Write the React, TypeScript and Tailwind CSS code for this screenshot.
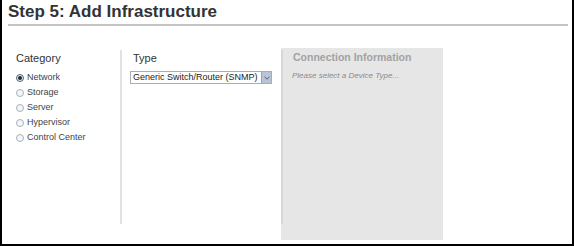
import React from "react";

const font = { fontFamily: '"Liberation Sans", Arial, sans-serif' };

function Radio({ checked, label }: { checked?: boolean; label: string }) {
  return (
    <div className="flex h-[15px] items-center">
      <span
        className={
          "flex h-[8px] w-[8px] items-center justify-center rounded-full border " +
          (checked ? "border-[#5a6470] bg-[#e8eef4]" : "border-[#a9b0b8] bg-[#f4f6f8]")
        }
      >
        {checked && <span className="h-[4px] w-[4px] rounded-full bg-[#1e2a3a]" />}
      </span>
      <span className="ml-[3px] text-[9px] leading-[11px] text-[#444]">{label}</span>
    </div>
  );
}

export default function App() {
  return (
    <div
      style={font}
      className="flex h-[246px] w-[574px] flex-col overflow-hidden border-b-2 border-l-2 border-r-2 border-black bg-white"
    >
      <div className="pl-[6px] pt-[2px] text-[17px] font-bold leading-[20px] text-[#333]">
        Step 5: Add Infrastructure
      </div>
      <div className="ml-[6px] mt-[2px] h-[2px] w-[560px] bg-[#c4c4c4]" />
      <div className="flex pt-[22px]">
        <div className="w-[118px] pl-[14px] pt-[4px]">
          <div className="text-[11px] leading-[13px] text-[#333]">Category</div>
          <div className="mt-[5px] flex flex-col">
            <Radio checked label="Network" />
            <Radio label="Storage" />
            <Radio label="Server" />
            <Radio label="Hypervisor" />
            <Radio label="Control Center" />
          </div>
        </div>
        <div className="mt-[2px] h-[174px] w-[2px] bg-[#e2e2e2]" />
        <div className="w-[159px] pt-[4px]">
          <div className="pl-[11px] text-[11px] leading-[13px] text-[#333]">Type</div>
          <div className="ml-[8px] mt-[6px] flex h-[13px] w-[142px] items-center border border-[#a7adb6] bg-white">
            <span className="flex-1 truncate pl-[2px] text-[9px] leading-[11px] text-[#222]">
              Generic Switch/Router (SNMP)
            </span>
            <span className="flex h-full w-[10px] items-center justify-center border-l border-[#9aa6b8] bg-[#b9c4d4]">
              <svg width="6" height="4" viewBox="0 0 6 4">
                <path d="M0.5 0.8 L3 3.2 L5.5 0.8" fill="none" stroke="#56627a" strokeWidth="1" />
              </svg>
            </span>
          </div>
        </div>
        <div className="flex h-[192px] w-[162px] bg-[#e6e6e6]">
          <div className="mt-[2px] h-[174px] w-[2px] bg-[#d6d6d6]" />
          <div className="pl-[10px] pt-[3px]">
            <div className="text-[10.5px] font-bold leading-[13px] text-[#a2a2a2]">
              Connection Information
            </div>
            <div className="-ml-[1px] mt-[7px] text-[8px] italic leading-[10px] text-[#8a8a8a]">
              Please select a Device Type...
            </div>
          </div>
        </div>
      </div>
    </div>
  );
}
